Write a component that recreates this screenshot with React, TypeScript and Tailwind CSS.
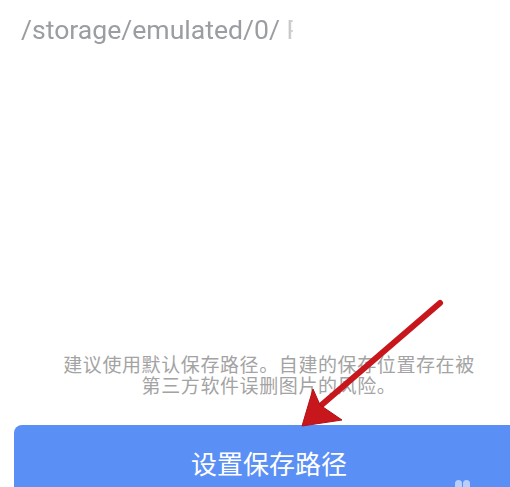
import React from 'react';

const App: React.FC = () => {
    return (
        <div className="relative w-[510px] h-[487px] overflow-hidden bg-white font-['Roboto','Noto_Sans_CJK_SC',sans-serif]">
            {/* Path field */}
            <div className="pt-[11px] pl-[21px]">
                <div className="w-[272px] overflow-hidden whitespace-nowrap text-[26.6px] leading-[38px] text-[#9a9da1] [mask-image:linear-gradient(to_right,black_96%,rgba(0,0,0,0.35))]">
                    /storage/emulated/0/ Pictures
                </div>
            </div>

            {/* Hint */}
            <div className="mt-[304px] w-[538px] text-center text-[19px] tracking-[0.6px] leading-[21px] text-[#a3a3a3] font-['Noto_Sans_CJK_SC',sans-serif]">
                <p>建议使用默认保存路径。自建的保存位置存在被</p>
                <p>第三方软件误删图片的风险。</p>
            </div>

            {/* Button */}
            <div className="mt-[30px] ml-[14px] w-[510px] h-[80px] rounded-[8px] bg-[#5a8ff6] flex justify-center pt-[21px]">
                <span className="text-[26px] leading-[34px] text-white font-['Noto_Sans_CJK_SC',sans-serif]">设置保存路径</span>
            </div>

            {/* Dots overlay */}
            <div className="absolute left-[455px] top-[480px] flex gap-[1px]">
                <span className="w-[7px] h-[10px] rounded-full bg-[#b9cffb]" />
                <span className="w-[7px] h-[10px] rounded-full bg-[#b9cffb]" />
            </div>

            {/* Red arrow annotation */}
            <svg className="absolute left-0 top-0" width="510" height="487" viewBox="0 0 510 487">
                <line x1="440" y1="303" x2="318" y2="408" stroke="#c8161d" strokeWidth="6" strokeLinecap="round" />
                <path d="M302 426 L313 389 L320 405 L342 420 Z" fill="#c8161d" stroke="#b01218" strokeWidth="1" strokeLinejoin="round" />
            </svg>
        </div>
    );
};

export default App;
